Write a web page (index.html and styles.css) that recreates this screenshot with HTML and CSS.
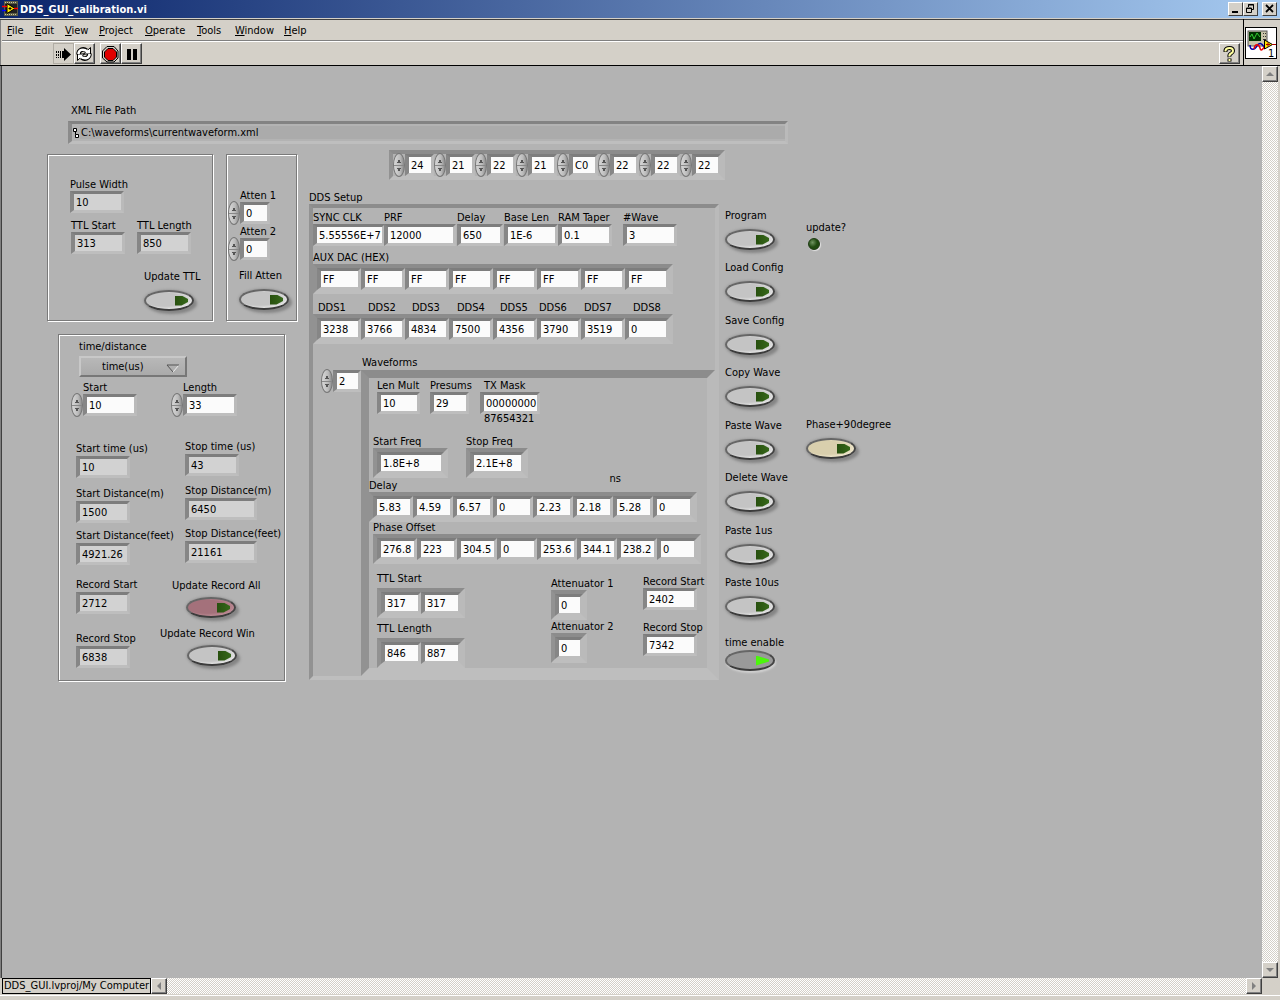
FILE: index.html
```html
<!DOCTYPE html>
<html lang="en">
<head>
	<meta charset="utf-8">
	<title>DDS_GUI_calibration.vi</title>
	<link rel="stylesheet" href="styles.css">
</head>
<body>
<div class="window">

	<div class="titlebar">
		<svg class="app_icon" width="16" height="16" viewBox="0 0 16 16">
			<rect x="2" y="0" width="14" height="15" fill="#5c5c44"/>
			<path d="M3 1.500h12M3 13.500h12" stroke="#c8c8a0" stroke-dasharray="1 1"/>
			<rect x="3" y="3" width="12" height="9" fill="#222"/>
			<path d="M5 2.500v10l8-5z" fill="#ffe800" stroke="#000"/>
			<path d="M6.500 7.500h3M8 6v3" stroke="#000"/>
			<path d="M0 5.500h5M12 7.500h4" stroke="#f00" stroke-width="1.500"/>
			<path d="M0 9.500h4" stroke="#00f" stroke-width="1.500"/>
		</svg>
		<span class="title">DDS_GUI_calibration.vi</span>
		<button class="win_button" aria-label="Minimize"><svg width="13" height="12" viewBox="0 0 13 12"><path d="M3 9h6" stroke="#000" stroke-width="2"/></svg></button>
		<button class="win_button" aria-label="Restore"><svg width="13" height="12" viewBox="0 0 13 12"><path d="M4.500 4V1.500h5v5H8M4 2h6M2.500 5h5v4.500h-5zM2 5.500h6" fill="none" stroke="#000"/></svg></button>
		<button class="win_button win_close" aria-label="Close"><svg width="13" height="12" viewBox="0 0 13 12"><path d="M3 2l7 7M10 2L3 9" stroke="#000" stroke-width="1.800"/></svg></button>
	</div>

	<div class="header">
		<div class="bars">
			<nav class="menubar">
				<a href="#"><u>F</u>ile</a>
				<a href="#"><u>E</u>dit</a>
				<a href="#"><u>V</u>iew</a>
				<a href="#"><u>P</u>roject</a>
				<a href="#"><u>O</u>perate</a>
				<a href="#"><u>T</u>ools</a>
				<a href="#"><u>W</u>indow</a>
				<a href="#"><u>H</u>elp</a>
			</nav>
			<div class="toolbar">
				<button class="tool tool_flat" aria-label="Run"><svg width="18" height="18" viewBox="0 0 18 18"><path d="M8 6h2V3l7 6.500-7 6.500v-3H8z"/><path d="M2.500 6v7M4.500 6v7" stroke="#000" stroke-dasharray="2 1"/><path d="M6.500 6v7" stroke="#000"/></svg></button>
				<button class="tool" aria-label="Run Continuously"><svg width="18" height="18" viewBox="0 0 18 18">
					<path d="M3.500 9.500C3.500 5 8 3 11.500 5.500M14.500 8.500c0 4.500-4.500 6.500-8 4" fill="none" stroke="#000" stroke-width="4.500"/>
					<path d="M15.500 2.500v6.500h-7zM2.500 15.500V9h7z" fill="#fff" stroke="#000"/>
					<path d="M3.500 9C3.500 5 8 3 12.500 6.500M14.500 9c0 4-4.500 6-9 2.500" fill="none" stroke="#fff" stroke-width="2.500"/>
				</svg></button>
				<button class="tool tool_abort" aria-label="Abort"><svg width="18" height="18" viewBox="0 0 18 18"><path d="M6 1.500h7L17 6v7l-4 4H6l-4.500-4V6z" fill="#d4d0c8" stroke="#000"/><path d="M7 3.500h5l3.500 3.500v5L12 15.500H7L3.500 12V7z" fill="#e00000" stroke="#000"/></svg></button>
				<button class="tool" aria-label="Pause"><svg width="18" height="18" viewBox="0 0 18 18"><path d="M5 4h4v11H5zM11 4h4v11h-4z"/></svg></button>
				<button class="tool tool_help" aria-label="Context Help"><svg width="18" height="18" viewBox="0 0 18 18">
					<path d="M5.500 7V5.500Q6 3 9.500 3T13 6Q13 7.500 11 8.500T9.500 12M9.500 13.500v3" fill="none" stroke="#000" stroke-width="4"/>
					<path d="M5.500 6.500V5.500Q6 3 9.500 3T13 6Q13 7.500 11 8.500T9.500 11.500M9.500 14v2" fill="none" stroke="#ffffa0" stroke-width="2"/>
				</svg></button>
			</div>
		</div>
		<div class="vi_icon">
			<svg width="32" height="32" viewBox="0 0 32 32">
				<rect x=".5" y=".5" width="31" height="31" fill="#fff" stroke="#000"/>
				<rect x="3" y="4" width="19" height="15" fill="#c8c4a8" stroke="#555"/>
				<rect x="4" y="5" width="12" height="9" fill="#003000"/>
				<path d="M5 10l2-3 2 5 3-6 3 4" fill="none" stroke="#3c3"/>
				<path d="M18 6.500h1M20 6.500h1M18 9.500h1M20 9.500h1M18 12.500h3" stroke="#333"/>
				<path d="M5 18c0 6 5 5 7 1s5-3 7 1" fill="none" stroke="#00a" stroke-width="1.500"/>
				<path d="M9 22c1-6 5-5 6-1s3 1 5-2" fill="none" stroke="#e00" stroke-width="1.500"/>
				<path d="M19.500 13v9l8-4.500z" fill="#ffe800" stroke="#000"/>
				<path d="M21 17.500h4M23 15.500v4M27 17.500h4" stroke="#a00"/>
				<text x="23" y="30" class="icon_text">1</text>
			</svg>
		</div>
	</div>

	<div class="workspace">
		<main class="panel">

			<label class="path"><span>XML File Path</span>
				<span class="path_box">
					<svg width="8" height="12" viewBox="0 0 8 12"><path d="M1.500 1.500h3v3h-3zM3.500 7.500h3v3h-3zM3.500 4.500v3" fill="#fff" stroke="#000"/></svg>
					<input type="text" value="C:\waveforms\currentwaveform.xml">
				</span>
			</label>

			<div class="columns">

				<div class="left">
					<div class="left_top">
						<section class="box ttl_box">
							<label class="ctl">Pulse Width<input class="field w54 ind" value="10" readonly></label>
							<div class="ttl_row">
								<label class="ctl">TTL Start<input class="field w54 ind" value="313" readonly></label>
								<label class="ctl">TTL Length<input class="field w54 ind" value="850" readonly></label>
							</div>
							<label class="push ttl_push">Update TTL<button class="oval"></button></label>
						</section>

						<section class="box atten_box">
							<label class="ctl spun"><span>Atten 1</span>
								<span class="spin_row"><span class="spin"><i></i><i></i></span><input class="field w30" value="0"></span>
							</label>
							<label class="ctl spun"><span>Atten 2</span>
								<span class="spin_row"><span class="spin"><i></i><i></i></span><input class="field w30" value="0"></span>
							</label>
							<label class="push atten_push">Fill Atten<button class="oval"></button></label>
						</section>
					</div>

					<section class="box time_box">
						<label class="ctl ring">time/distance
							<span class="ring_box">
								<select><option>time(us)</option><option>distance</option></select>
								<svg width="14" height="9" viewBox="0 0 14 9"><path d="M13 1L7 8" stroke="#eee"/><path d="M7 8L1 1h12" fill="none" stroke="#555"/></svg>
							</span>
						</label>
						<div class="range">
							<label class="ctl spun"><span>Start</span>
								<span class="spin_row"><span class="spin"><i></i><i></i></span><input class="field w54" value="10"></span>
							</label>
							<label class="ctl spun"><span>Length</span>
								<span class="spin_row"><span class="spin"><i></i><i></i></span><input class="field w54" value="33"></span>
							</label>
						</div>
						<div class="readouts">
							<div class="starts">
								<label class="ctl">Start time (us)<input class="field w54 ind" value="10" readonly></label>
								<label class="ctl">Start Distance(m)<input class="field w54 ind" value="1500" readonly></label>
								<label class="ctl">Start Distance(feet)<input class="field w54 ind" value="4921.26" readonly></label>
								<label class="ctl">Record Start<input class="field w54 ind" value="2712" readonly></label>
								<label class="ctl">Record Stop<input class="field w54 ind" value="6838" readonly></label>
							</div>
							<div class="stops">
								<label class="ctl">Stop time (us)<input class="field w54 ind" value="43" readonly></label>
								<label class="ctl">Stop Distance(m)<input class="field w72 ind" value="6450" readonly></label>
								<label class="ctl">Stop Distance(feet)<input class="field w72 ind" value="21161" readonly></label>
								<label class="push update_all">Update Record All<button class="oval red"></button></label>
								<label class="push update_win">Update Record Win<button class="oval"></button></label>
							</div>
						</div>
					</section>
				</div>

				<div class="middle">
					<div class="array hex" role="group" aria-label="Bytes">
						<span class="spin_row"><span class="spin"><i></i><i></i></span><input class="field" value="24" aria-label="Byte 0"></span>
						<span class="spin_row"><span class="spin"><i></i><i></i></span><input class="field" value="21" aria-label="Byte 1"></span>
						<span class="spin_row"><span class="spin"><i></i><i></i></span><input class="field" value="22" aria-label="Byte 2"></span>
						<span class="spin_row"><span class="spin"><i></i><i></i></span><input class="field" value="21" aria-label="Byte 3"></span>
						<span class="spin_row"><span class="spin"><i></i><i></i></span><input class="field" value="C0" aria-label="Byte 4"></span>
						<span class="spin_row"><span class="spin"><i></i><i></i></span><input class="field" value="22" aria-label="Byte 5"></span>
						<span class="spin_row"><span class="spin"><i></i><i></i></span><input class="field" value="22" aria-label="Byte 6"></span>
						<span class="spin_row"><span class="spin"><i></i><i></i></span><input class="field" value="22" aria-label="Byte 7"></span>
					</div>

					<div class="caption">DDS Setup</div>
					<section class="cluster setup">
						<div class="setup_row">
							<label class="ctl">SYNC CLK<input class="field w72" value="5.55556E+7"></label>
							<label class="ctl">PRF<input class="field w72" value="12000"></label>
							<label class="ctl">Delay<input class="field w46" value="650"></label>
							<label class="ctl">Base Len<input class="field w54" value="1E-6"></label>
							<label class="ctl">RAM Taper<input class="field w54" value="0.1"></label>
							<label class="ctl">#Wave<input class="field w54" value="3"></label>
						</div>

						<div class="caption" id="aux_dac">AUX DAC (HEX)</div>
						<div class="array w44" role="group" aria-labelledby="aux_dac">
							<input class="field" value="FF" aria-label="DAC 1">
							<input class="field" value="FF" aria-label="DAC 2">
							<input class="field" value="FF" aria-label="DAC 3">
							<input class="field" value="FF" aria-label="DAC 4">
							<input class="field" value="FF" aria-label="DAC 5">
							<input class="field" value="FF" aria-label="DAC 6">
							<input class="field" value="FF" aria-label="DAC 7">
							<input class="field" value="FF" aria-label="DAC 8">
						</div>

						<div class="dds_labels">
							<label for="dds1">DDS1</label>
							<label for="dds2">DDS2</label>
							<label for="dds3">DDS3</label>
							<label for="dds4">DDS4</label>
							<label for="dds5">DDS5</label>
							<label for="dds6">DDS6</label>
							<label for="dds7">DDS7</label>
							<label for="dds8">DDS8</label>
						</div>
						<div class="array w44">
							<input class="field" id="dds1" value="3238">
							<input class="field" id="dds2" value="3766">
							<input class="field" id="dds3" value="4834">
							<input class="field" id="dds4" value="7500">
							<input class="field" id="dds5" value="4356">
							<input class="field" id="dds6" value="3790">
							<input class="field" id="dds7" value="3519">
							<input class="field" id="dds8" value="0">
						</div>

						<div class="caption wave_caption">Waveforms</div>
						<div class="waveforms">
							<span class="spin_row wave_index"><span class="spin"><i></i><i></i></span><input class="field" value="2" aria-label="Waveform index"></span>
							<div class="cluster"><div class="cluster wave">
								<div class="wave_top">
									<label class="ctl">Len Mult<input class="field w43" value="10"></label>
									<label class="ctl">Presums<input class="field w39" value="29"></label>
									<label class="ctl mask"><span>TX Mask</span><input class="field w60" value="00000000"><span class="mask_bits">87654321</span></label>
								</div>
								<div class="freqs">
									<label class="ctl">Start Freq<span class="array"><input class="field w67" value="1.8E+8"></span></label>
									<label class="ctl">Stop Freq<span class="array"><input class="field w54" value="2.1E+8"></span></label>
								</div>
								<div class="caption delay_caption"><span id="delays">Delay</span><span class="unit">ns</span></div>
								<div class="array w40" role="group" aria-labelledby="delays">
									<input class="field" value="5.83" aria-label="Delay 1">
									<input class="field" value="4.59" aria-label="Delay 2">
									<input class="field" value="6.57" aria-label="Delay 3">
									<input class="field" value="0" aria-label="Delay 4">
									<input class="field" value="2.23" aria-label="Delay 5">
									<input class="field" value="2.18" aria-label="Delay 6">
									<input class="field" value="5.28" aria-label="Delay 7">
									<input class="field" value="0" aria-label="Delay 8">
								</div>
								<div class="phase">
									<div class="caption" id="phases">Phase Offset</div>
									<div class="array w40" role="group" aria-labelledby="phases">
										<input class="field" value="276.8" aria-label="Phase 1">
										<input class="field" value="223" aria-label="Phase 2">
										<input class="field" value="304.5" aria-label="Phase 3">
										<input class="field" value="0" aria-label="Phase 4">
										<input class="field" value="253.6" aria-label="Phase 5">
										<input class="field" value="344.1" aria-label="Phase 6">
										<input class="field" value="238.2" aria-label="Phase 7">
										<input class="field" value="0" aria-label="Phase 8">
									</div>
								</div>
								<div class="wave_bottom">
									<div class="ttls">
										<div class="caption" id="ttl_starts">TTL Start</div>
										<div class="array w40" role="group" aria-labelledby="ttl_starts">
											<input class="field" value="317" aria-label="TTL Start 1">
											<input class="field" value="317" aria-label="TTL Start 2">
										</div>
										<div class="caption" id="ttl_lengths">TTL Length</div>
										<div class="array w40" role="group" aria-labelledby="ttl_lengths">
											<input class="field" value="846" aria-label="TTL Length 1">
											<input class="field" value="887" aria-label="TTL Length 2">
										</div>
									</div>
									<div class="attens">
										<label class="ctl">Attenuator 1<span class="array"><input class="field w28" value="0"></span></label>
										<label class="ctl">Attenuator 2<span class="array"><input class="field w28" value="0"></span></label>
									</div>
									<div class="records">
										<label class="ctl">Record Start<input class="field w54" value="2402"></label>
										<label class="ctl">Record Stop<input class="field w54" value="7342"></label>
									</div>
								</div>
							</div></div>
						</div>
					</section>
				</div>

				<div class="actions">
					<label class="push">Program<button class="oval"></button></label>
					<label class="push">Load Config<button class="oval"></button></label>
					<label class="push">Save Config<button class="oval"></button></label>
					<label class="push">Copy Wave<button class="oval"></button></label>
					<label class="push">Paste Wave<button class="oval"></button></label>
					<label class="push">Delete Wave<button class="oval"></button></label>
					<label class="push">Paste 1us<button class="oval"></button></label>
					<label class="push">Paste 10us<button class="oval"></button></label>
					<label class="push pressed">time enable<button class="oval on"></button></label>
				</div>

				<div class="extras">
					<div class="update">update?<span class="led"></span></div>
					<label class="push">Phase+90degree<button class="oval cream"></button></label>
				</div>

			</div>
		</main>

		<div class="scroll vertical">
			<button aria-label="Scroll up"><svg width="8" height="4" viewBox="0 0 8 4"><path d="M0 4l4-4 4 4z"/></svg></button>
			<button aria-label="Scroll down"><svg width="8" height="4" viewBox="0 0 8 4"><path d="M0 0l4 4 4-4z"/></svg></button>
		</div>
	</div>

	<div class="statusbar">
		<span class="project">DDS_GUI.lvproj/My Computer</span>
		<div class="scroll horizontal">
			<button aria-label="Scroll left"><svg width="4" height="8" viewBox="0 0 4 8"><path d="M4 0L0 4l4 4z"/></svg></button>
			<button aria-label="Scroll right"><svg width="4" height="8" viewBox="0 0 4 8"><path d="M0 0l4 4-4 4z"/></svg></button>
		</div>
	</div>

</div>
</body>
</html>
```
FILE: styles.css
```css
* {
	box-sizing: border-box;
}

body {
	margin: 0;
	background: #d4d0c8;
}

body, input, select, button {
	font-family: "DejaVu Sans Condensed", "DejaVu Sans", sans-serif;
	font-size: 11px;
	line-height: 13px;
	color: #000;
}

button {
	padding: 0;
}

.window {
	display: flex;
	flex-direction: column;
	min-height: 100vh;
}

/* title bar */

.titlebar {
	display: flex;
	align-items: center;
	height: 18px;
	padding: 0 3px 0 2px;
	background: linear-gradient(to right, #0a246a, #a6caf0);
}

.title {
	flex: 1;
	padding-left: 2px;
	font-weight: bold;
	color: #fff;
}

.win_button {
	width: 15px;
	height: 14px;
	border: 1px solid;
	border-color: #fff #404040 #404040 #fff;
	background: #d4d0c8;
}

.win_button svg {
	display: block;
}

.win_close {
	margin-left: 4px;
}

/* menu and toolbar */

.header {
	display: flex;
	height: 48px;
	padding-left: 2px;
	border-top: 1px solid #d4d0c8;
	box-shadow: inset 0 1px 0 #404040, inset 1px 0 0 #808080;
	border-bottom: 1px solid #000;
}

.bars {
	flex: 1;
}

.menubar {
	display: grid;
	grid-template-columns: 28px 30px 34px 46px 52px 38px 49px auto;
	height: 21px;
	padding: 5px 0 0 5px;
}

.menubar a {
	color: #000;
	text-decoration: none;
}

.toolbar {
	display: flex;
	height: 25px;
	padding: 2px 3px 0 51px;
	border-top: 1px solid #808080;
	box-shadow: inset 0 1px 0 #fff;
}

.tool {
	width: 21px;
	height: 21px;
	border: 1px solid;
	border-color: #fff #404040 #404040 #fff;
	box-shadow: inset -1px -1px 0 #808080;
	background: #d4d0c8;
}

.tool svg {
	display: block;
}

.tool_flat {
	border-color: #b0aca4;
	box-shadow: none;
}

.tool_abort {
	margin-left: 5px;
}

.tool_help {
	margin-left: auto;
}

.vi_icon {
	width: 37px;
	padding: 8px 0 0 1px;
	border-left: 1px solid #000;
}

.icon_text {
	font-size: 11px;
}

/* panel */

.workspace {
	display: flex;
	flex: 1;
	padding-right: 2px;
	border-left: 1px solid #808080;
	box-shadow: inset 1px 0 0 #404040;
}

.panel {
	flex: 1;
	margin-left: 1px;
	padding: 38px 0 40px 45px;
	background: #b3b3b3;
}

.caption {
	height: 13px;
}

.path {
	display: flex;
	flex-direction: column;
	width: 720px;
	gap: 4px;
	margin-left: 21px;
}

.path > span:first-child {
	padding-left: 3px;
}

.path_box {
	display: flex;
	align-items: center;
	height: 23px;
	border: 3px solid;
	border-left-width: 4px;
	border-color: #838383 #bababa #bebebe #8b8b8b;
}

.path_box input {
	flex: 1;
	padding: 0 0 0 1px;
	border: 0;
	background: #ababab;
}

.columns {
	display: flex;
	align-items: flex-start;
}

.box {
	display: flex;
	flex-direction: column;
	align-items: flex-start;
	border: 1px solid #7a7a7a;
	box-shadow: 1px 1px 0 #fff, inset 1px 1px 0 #fff;
}

/* controls */

.ctl, .push {
	display: flex;
	flex-direction: column;
	align-items: flex-start;
	white-space: nowrap;
}

.field {
	display: block;
	height: 22px;
	padding: 1px 0 0 2px;
	border: 3px solid;
	border-left-width: 4px;
	border-color: #7d7d7d #bababa #bebebe #868686;
	border-radius: 0;
	background: #fbfbfb;
}

.ind {
	background: #d2d2d2;
}

.w28 { width: 28px; }
.w30 { width: 30px; }
.w39 { width: 39px; }
.w43 { width: 43px; }
.w46 { width: 46px; }
.w54 { width: 54px; }
.w60 { width: 60px; }
.w67 { width: 67px; }
.w72 { width: 72px; }

.array, .cluster {
	border: 4px solid;
	border-color: #8c8c8c #bababa #bebebe #929292;
}

.array {
	display: flex;
	width: max-content;
}

.w44 .field { width: 44px; }
.w40 .field { width: 40px; }

.spin_row {
	display: flex;
	align-items: center;
	height: 22px;
}

.spin {
	display: flex;
	flex-direction: column;
	flex: none;
	width: 12px;
	height: 24px;
	border: 1px solid #777;
	border-radius: 50%;
	background: linear-gradient(to right, #d8d8d8, #bbb 60%, #8a8a8a);
	overflow: hidden;
}

.spin i {
	flex: 1;
	background: conic-gradient(from 155deg at 50% 20%, #555 50deg, transparent 0) center 4px / 6px 5px no-repeat;
}

.spin i + i {
	border-top: 1px solid #888;
	background: conic-gradient(from 335deg at 50% 80%, #555 50deg, transparent 0) center 2px / 6px 5px no-repeat;
}

.spun > span:first-child {
	padding-left: 12px;
}

.push {
	gap: 7px;
}

.oval {
	display: flex;
	align-items: center;
	justify-content: flex-end;
	width: 50px;
	height: 21px;
	padding-right: 4px;
	border: 2px solid;
	border-color: #666 #444 #3c3c3c #666;
	border-radius: 50%;
	background: radial-gradient(ellipse at 40% 45%, #c4c4c4 50%, #e8e8e8 75%);
	box-shadow: 3px 3px 3px #858585, 0 0 3px #888;
}

.oval::after {
	content: "";
	width: 13px;
	height: 10px;
	background: linear-gradient(to right, #28500f, #36681a);
	clip-path: polygon(0 0, 50% 0, 100% 35%, 100% 65%, 50% 100%, 0 100%);
}

.oval.red {
	background: radial-gradient(ellipse at 40% 45%, #a4717b 50%, #c08e98 75%);
}

.oval.cream {
	background: radial-gradient(ellipse at 40% 45%, #d9cfad 50%, #f2ead0 75%);
}

.oval.on {
	background: #9a9a9a;
	box-shadow: 1px 2px 2px #d0d0d0;
}

.oval.on::after {
	background: #4cf50c;
	clip-path: polygon(0 0, 100% 40%, 100% 60%, 0 100%);
}

/* left column */

.left {
	padding-top: 10px;
}

.left_top {
	display: flex;
	gap: 13px;
}

.ttl_box {
	width: 166px;
	height: 167px;
	padding: 23px 0 0 22px;
}

.ttl_row {
	display: flex;
	gap: 12px;
	padding: 6px 0 16px 1px;
}

.ttl_push {
	padding-left: 74px;
}

.atten_box {
	width: 71px;
	padding: 34px 0 0 1px;
	gap: 1px;
}

.atten_push {
	padding: 8px 0 0 11px;
}

.time_box {
	width: 227px;
	height: 347px;
	margin: 13px 0 0 11px;
	padding: 5px 0 0 12px;
}

.ring {
	gap: 3px;
	padding-left: 8px;
}

.ring_box {
	position: relative;
}

.ring_box select {
	appearance: none;
	display: block;
	width: 108px;
	height: 21px;
	padding: 0 0 0 21px;
	border: 2px solid;
	border-color: #c8c8c8 #777 #777 #c8c8c8;
	border-radius: 0;
	background: linear-gradient(#b8b8b8, #aaa);
}

.ring_box svg {
	position: absolute;
	top: 8px;
	right: 7px;
}

.range {
	display: flex;
	gap: 34px;
	padding-top: 4px;
}

.readouts {
	display: flex;
	padding: 24px 0 0 5px;
}

.readouts .ctl {
	gap: 1px;
}

.readouts .push {
	gap: 5px;
}

.starts, .stops {
	display: grid;
	justify-items: start;
}

.starts {
	width: 84px;
	padding-top: 2px;
	grid-template-rows: 45px 42px 49px 54px 36px;
}

.stops {
	grid-template-rows: 44px 43px 52px 48px 39px;
}

.stops .ctl {
	padding-left: 25px;
}

.update_all {
	padding-left: 12px;
}

.update_all .oval {
	margin-left: 14px;
}

.update_win .oval {
	margin-left: 27px;
}

/* middle column */

.middle {
	width: 410px;
	padding-top: 6px;
	margin-left: 12px;
}

.hex {
	margin: 0 0 11px 80px;
}

.hex .field {
	width: 29px;
}

.setup {
	padding-top: 3px;
}

.setup_row {
	display: grid;
	grid-template-columns: 71px 73px 47px 54px 65px auto;
}

#aux_dac {
	margin-top: 5px;
}

.dds_labels {
	display: grid;
	grid-template-columns: 50px 44px 45px 43px 39px 45px 49px auto;
	padding: 7px 0 0 5px;
}

.wave_caption {
	padding-left: 49px;
	margin: 12px 0 1px;
}

.waveforms {
	display: flex;
	justify-content: flex-end;
}

.wave_index .field {
	width: 28px;
}

.wave {
	width: 346px;
	padding-top: 1px;
}

.wave_top {
	display: grid;
	grid-template-columns: 53px 50px auto;
	padding: 0 0 12px 8px;
}

.mask span {
	padding-left: 4px;
}

.mask_bits {
	line-height: 9px;
}

.freqs {
	display: grid;
	grid-template-columns: 93px auto;
	padding-left: 4px;
}

.delay_caption {
	display: flex;
	margin-top: 1px;
}

.unit {
	margin: -7px 86px 0 auto;
}

.phase {
	padding-left: 4px;
	margin-top: -1px;
}

.wave_bottom {
	display: grid;
	grid-template-columns: 174px 92px auto;
	padding: 8px 0 0 8px;
}

.ttls .array {
	margin: 3px 0 4px;
}

.ttls .array:last-child {
	margin-bottom: 0;
}

.attens {
	padding-top: 5px;
}

.records {
	display: flex;
	flex-direction: column;
	gap: 11px;
	padding-top: 3px;
}

/* right columns */

.actions {
	display: grid;
	grid-template-rows: repeat(3, 52px 53px) 52px 60px auto;
	width: 87px;
	padding: 65px 0 0 6px;
}

.pressed {
	gap: 1px;
}

.extras {
	display: grid;
	grid-template-rows: 197px auto;
	padding-top: 77px;
}

.led {
	display: block;
	width: 12px;
	height: 12px;
	margin: 4px 2px;
	border: 1px solid #1d3a12;
	border-radius: 50%;
	background: radial-gradient(circle at 35% 35%, #6f9460, #1f4a10 50%);
	box-shadow: 1px 1px 1px #e4e4e4;
}

/* scroll bars */

.scroll {
	display: flex;
	justify-content: space-between;
	background: repeating-conic-gradient(#fff 0 25%, #d4d0c8 0 50%) 0 0 / 2px 2px;
}

.scroll button {
	display: flex;
	align-items: center;
	justify-content: center;
	width: 16px;
	height: 16px;
	border: 1px solid;
	border-color: #fff #404040 #404040 #fff;
	box-shadow: inset -1px -1px 0 #808080;
	background: #d4d0c8;
}

.scroll path {
	fill: #808080;
}

.vertical {
	flex-direction: column;
	width: 16px;
}

.horizontal {
	flex: 1;
}

.statusbar {
	display: flex;
	height: 22px;
	padding: 0 18px 6px 2px;
	background: linear-gradient(#d4d0c8 17px, #fff 17px 18px, #d4d0c8 18px);
}

.project {
	width: 149px;
	padding-left: 1px;
	border: 1px solid #000;
	white-space: nowrap;
}
```
